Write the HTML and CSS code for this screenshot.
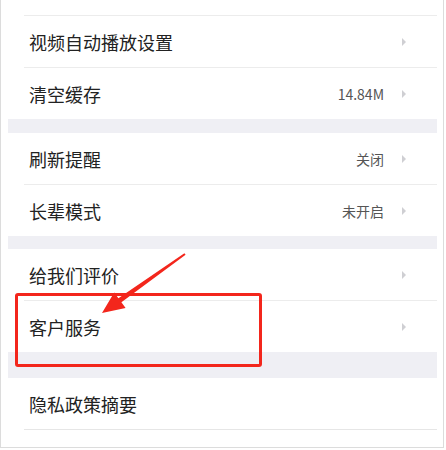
FILE: index.html
```html
<!DOCTYPE html>
<html lang="zh-CN">
<head>
    <meta charset="UTF-8">
    <meta name="viewport" content="width=device-width, initial-scale=1.0">
    <title>设置</title>
    <link rel="stylesheet" href="styles.css">
</head>
<body>
    <div class="frame">
        <div class="panel">
            <!-- 上一组，只露出底部 -->
            <div class="group">
                <div class="row row-cut"></div>
            </div>
            <div class="group">
                <div class="row">
                    <span class="label">视频自动播放设置</span>
                    <span class="arrow"></span>
                </div>
                <div class="row">
                    <span class="label">清空缓存</span>
                    <span class="value">14.84M</span>
                    <span class="arrow"></span>
                </div>
            </div>
            <div class="gap"></div>
            <div class="group">
                <div class="row">
                    <span class="label">刷新提醒</span>
                    <span class="value">关闭</span>
                    <span class="arrow"></span>
                </div>
                <div class="row">
                    <span class="label">长辈模式</span>
                    <span class="value">未开启</span>
                    <span class="arrow"></span>
                </div>
            </div>
            <div class="gap gap-sm"></div>
            <div class="group">
                <div class="row">
                    <span class="label">给我们评价</span>
                    <span class="arrow"></span>
                </div>
                <div class="row">
                    <span class="label">客户服务</span>
                    <span class="arrow"></span>
                </div>
            </div>
            <div class="gap gap-lg"></div>
            <div class="group">
                <div class="row row-last">
                    <span class="label">隐私政策摘要</span>
                </div>
            </div>
        </div>

        <!-- 标注 -->
        <div class="mark-box"></div>
        <svg class="mark-arrow" width="446" height="450" viewBox="0 0 446 450">
            <polygon fill="#f3261c" points="185.6,254.8 121.4,302.2 125.6,308 102,313 114.2,292.4 118.4,298.2 184.4,253.2"/>
        </svg>
    </div>
</body>
</html>
```

FILE: styles.css
```css
body {
    margin: 0;
    padding: 0;
    background-color: #fff;
    font-family: "Noto Sans CJK SC", "Noto Sans", sans-serif;
}
.frame {
    position: relative;
    width: 444px;
    height: 448px;
    border: 1px solid #dcdcdc;
    border-top: none;
    padding: 0 6px 0 7px;
    box-sizing: border-box;
    overflow: hidden;
}
.panel {
    background: #fff;
}
.row {
    display: flex;
    align-items: center;
    height: 51px;
    margin-left: 16px;
    padding-left: 5px;
    padding-right: 31px;
    border-bottom: 1px solid #ececec;
}
.row:last-child {
    border-bottom: none;
}
.row.row-cut {
    height: 15px;
    border-bottom: 1px solid #ececec;
}
.row.row-last {
    border-bottom: 1px solid #e6e6e6;
}
.label {
    flex: 1;
    font-size: 18px;
    color: #222;
}
.value {
    font-size: 14px;
    color: #555;
    margin-right: 18px;
}
.arrow {
    width: 0;
    height: 0;
    border-left: 4px solid #cfcfd3;
    border-top: 4px solid transparent;
    border-bottom: 4px solid transparent;
}
.gap {
    height: 14px;
    background-color: #efeff4;
}
.gap-sm {
    height: 13px;
}
.gap-lg {
    height: 26px;
}
.mark-box {
    position: absolute;
    left: 14px;
    top: 293px;
    width: 247px;
    height: 74px;
    box-sizing: border-box;
    border: 3px solid #f3261c;
    border-radius: 3px;
}
.mark-arrow {
    position: absolute;
    left: -1px;
    top: 0;
}
```
